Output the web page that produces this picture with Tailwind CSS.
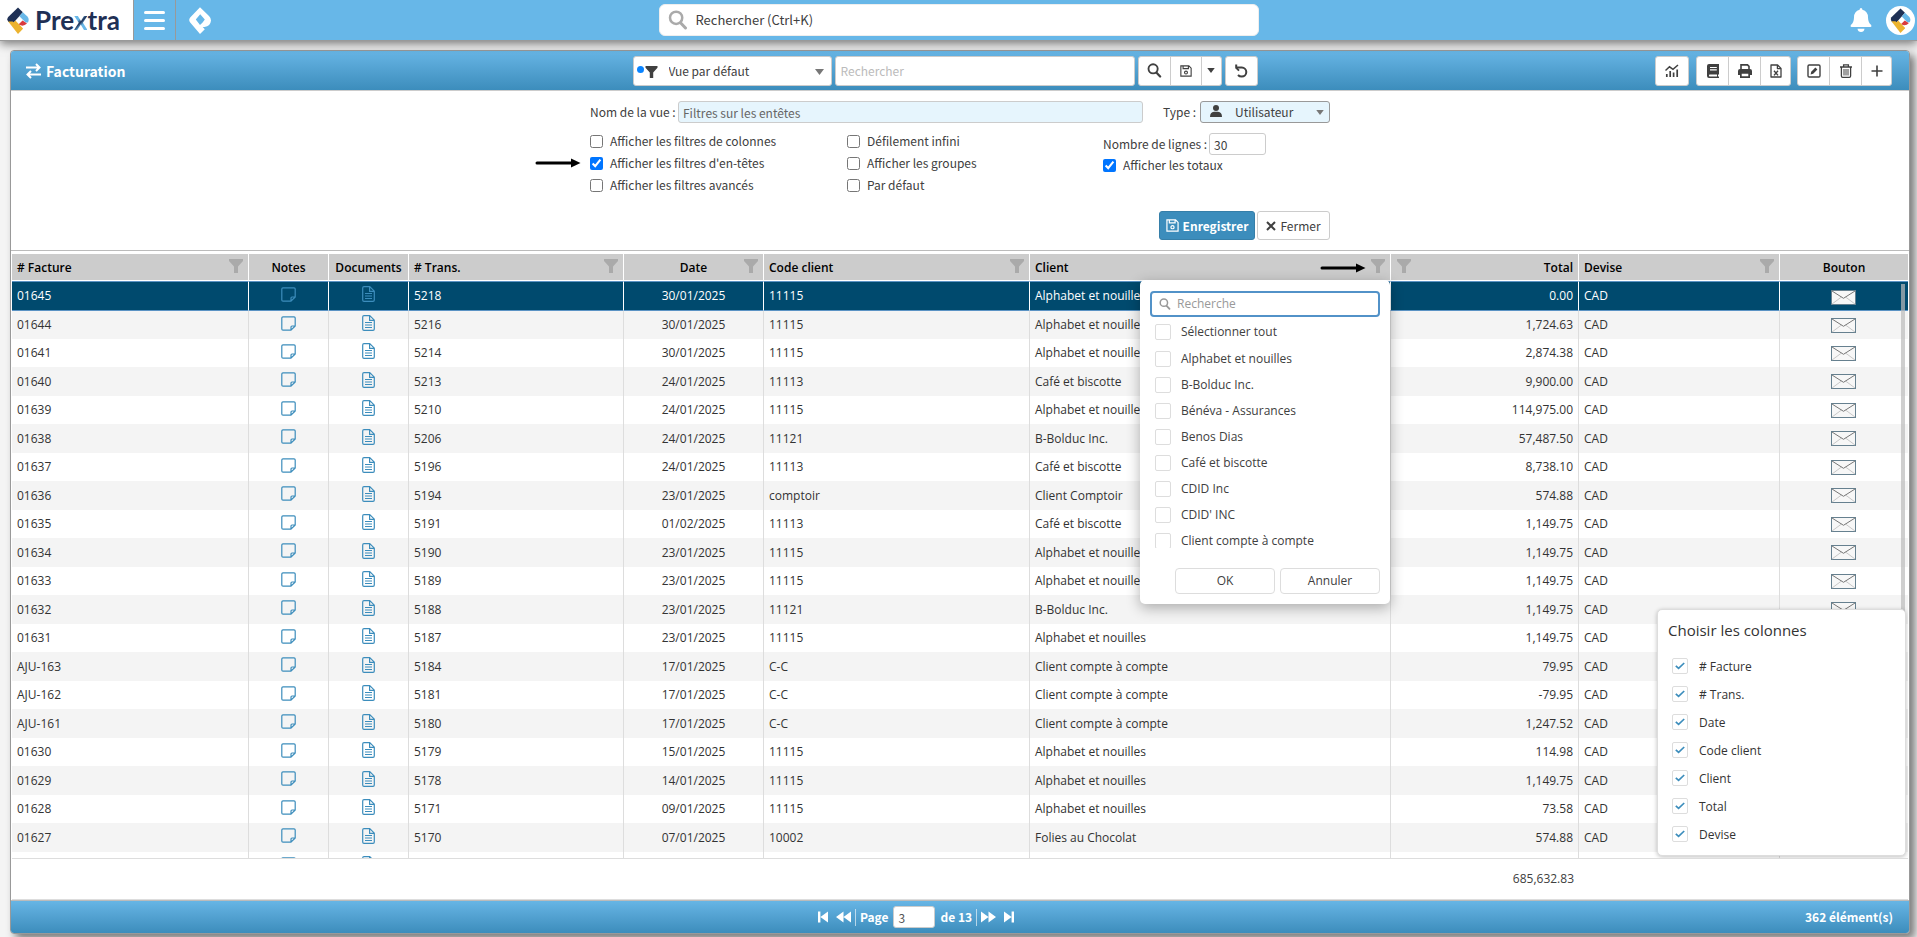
<!DOCTYPE html>
<html lang="fr">
<head>
    <meta charset="UTF-8">
    <meta name="viewport" content="width=device-width, initial-scale=1.0">
    <title>Prextra - Facturation</title>
    <script src="https://cdn.jsdelivr.net/npm/@tailwindcss/browser@4"></script>
</head>
<body class="h-screen flex flex-col overflow-hidden bg-[#f4f4f4] text-[#404040] text-[12px] leading-5 font-['Noto_Sans_CJK_SC',sans-serif]">

    <!-- Icons -->
    <svg class="hidden">
        <symbol id="logo" viewBox="0 0 22 27">
            <path fill="#1f3055" d="M11 0.5 L15.8 5.2 L5.2 17.2 L1.2 14.4 Q-0.6 12.4 1.2 10 Z"/>
            <path fill="#67b7e8" d="M15.8 5.2 L20.4 9.4 Q22.6 12 21 15.4 L18.6 15.6 L12.4 9.2 Z"/>
            <path fill="#d93a3e" d="M11.4 17.6 L15.6 13.6 L20 16.6 Q17.4 19 14.6 18.6 Z"/>
            <path fill="#ecb32f" d="M1.2 14.4 L5.6 14.4 L16 21.8 L11 27 Z"/>
            <path fill="#ecb32f" d="M5.2 17.2 L8.4 13.4 L16 21.6 L12 24 Z"/>
        </symbol>
        <symbol id="logo-plain" viewBox="0 0 22 27">
            <path fill="currentColor" fill-rule="evenodd" d="M11 0.3 L20 9 Q22 11 22 13.5 Q21.5 19 15.5 20 L13.7 20 L15.8 22.2 L11 27 L1.2 15.5 Q-0.8 13 1.2 10.5 Z M11.2 7.2 L6.8 12.6 L11 18 L13.6 15.4 L15.8 12.4 Z"/>
        </symbol>
        <symbol id="loupe" viewBox="0 0 16 16">
            <circle cx="6.5" cy="6.2" r="4.9" fill="none" stroke="currentColor" stroke-width="2"/>
            <path stroke="currentColor" stroke-width="2.4" stroke-linecap="round" d="M10.2 10.4 L14 14.4"/>
        </symbol>
        <symbol id="funnel" viewBox="0 0 14 14">
            <path fill="currentColor" d="M0 0 H14 V2 L9 7.5 V14 H5 V7.5 L0 2 Z"/>
        </symbol>
        <symbol id="save" viewBox="0 0 14 14">
            <path fill="none" stroke="currentColor" stroke-width="1.3" d="M1 1 H10.3 L13 3.7 V13 H1 Z M3.6 1 V4.2 H9.8 V1"/>
            <circle cx="7" cy="8.8" r="1.7" fill="none" stroke="currentColor" stroke-width="1.3"/>
        </symbol>
        <symbol id="undo" viewBox="0 0 14 14">
            <path fill="none" stroke="currentColor" stroke-width="2" d="M2 3.6 H7.8 A4.4 4.4 0 0 1 7.8 12.6 Q5.4 12.6 4 11"/>
            <path fill="none" stroke="currentColor" stroke-width="2" d="M2.2 0.4 V4.6 M2 3.6 L5 6.6"/>
        </symbol>
        <symbol id="chart" viewBox="0 0 14 14">
            <path fill="none" stroke="currentColor" stroke-width="1.5" d="M0.5 6.5 L4.5 2.8 L8 5.3 L13 1"/>
            <path stroke="currentColor" stroke-width="1.7" d="M1.8 10 V13 M5.2 7 V13 M8.6 8.5 V13 M12.2 5.5 V13"/>
        </symbol>
        <symbol id="book" viewBox="0 0 14 14">
            <path fill="currentColor" fill-rule="evenodd" d="M3 0 H13 V10.6 H12 V12.6 H13 V14 H3 Q1 14 1 12 V2 Q1 0 3 0 Z M4 3 V4.1 H10.8 V3 Z M4 5.3 V6.4 H10.8 V5.3 Z M3.4 10.6 Q2.4 11.6 3.4 12.6 H11 V10.6 Z"/>
        </symbol>
        <symbol id="print" viewBox="0 0 14 14">
            <path fill="none" stroke="currentColor" stroke-width="1.6" d="M3 5 V0.9 H9.5 L11 2.4 V5"/>
            <path fill="currentColor" fill-rule="evenodd" d="M2 5 H12 Q14 5 14 7 V11 H12 V14 H2 V11 H0 V7 Q0 5 2 5 Z M3.7 9.8 V12.3 H10.3 V9.8 Z"/>
        </symbol>
        <symbol id="excel" viewBox="0 0 12 14">
            <path fill="none" stroke="currentColor" stroke-width="1.3" stroke-linejoin="round" d="M1 1 H7.6 L11 4.4 V13 H1 Z M7.4 1 V4.6 H11"/>
            <path stroke="currentColor" stroke-width="1.4" d="M4 6.8 L8 11.4 M8 6.8 L4 11.4"/>
        </symbol>
        <symbol id="edit" viewBox="0 0 14 14">
            <rect x="1" y="1" width="12" height="12" rx="1.2" fill="none" stroke="currentColor" stroke-width="1.4"/>
            <path fill="currentColor" d="M3.6 10.4 L4.2 7.8 L8.4 3.6 L10.4 5.6 L6.2 9.8 Z"/>
        </symbol>
        <symbol id="trash" viewBox="0 0 14 14">
            <path fill="none" stroke="currentColor" stroke-width="1.3" d="M1 3 H13 M4.6 3 V0.8 H9.4 V3 M2.4 3 V12 Q2.4 13.3 3.7 13.3 H10.3 Q11.6 13.3 11.6 12 V3"/>
            <path stroke="currentColor" stroke-width="1" d="M5 5 V11.5 M7 5 V11.5 M9 5 V11.5"/>
        </symbol>
        <symbol id="plus" viewBox="0 0 14 14">
            <path stroke="currentColor" stroke-width="1.6" d="M7 1.5 V12.5 M1.5 7 H12.5"/>
        </symbol>
        <symbol id="note" viewBox="0 0 15 15">
            <path fill="none" stroke="currentColor" stroke-width="1.2" stroke-linejoin="round" d="M2 0.8 H13 Q14.2 0.8 14.2 2 V10 L10 14.2 H2 Q0.8 14.2 0.8 13 V2 Q0.8 0.8 2 0.8 Z M10 14 V11 Q10 10 11 10 H14"/>
        </symbol>
        <symbol id="doc" viewBox="0 0 13 16">
            <path fill="none" stroke="currentColor" stroke-width="1.2" stroke-linejoin="round" d="M2 0.7 H7.8 L12.3 5.2 V14 Q12.3 15.3 11 15.3 H2 Q0.7 15.3 0.7 14 V2 Q0.7 0.7 2 0.7 Z M7.6 0.8 V5.4 H12.2"/>
            <path stroke="currentColor" stroke-width="1" d="M3 7.5 H10 M3 10 H10 M3 12.5 H10"/>
        </symbol>
        <symbol id="mail" viewBox="0 0 25 15">
            <rect x="0.5" y="0.5" width="24" height="14" fill="#f7f7f7" stroke="#66808f"/>
            <path fill="none" stroke="#c8c8c8" d="M1 14 L10.5 7 M24 14 L14.5 7"/>
            <path fill="none" stroke="#777" d="M1 1 L12.5 8.3 L24 1"/>
        </symbol>
        <symbol id="check" viewBox="0 0 10 8">
            <path fill="none" stroke="currentColor" stroke-width="1.7" d="M0.8 3.8 L3.6 6.4 L9.2 1"/>
        </symbol>
        <symbol id="arrow" viewBox="0 0 46 10">
            <path stroke="#000" stroke-width="3" stroke-linecap="round" d="M2 5 H38"/>
            <path fill="#000" d="M36 0.5 L45.5 5 L36 9.5 Z"/>
        </symbol>
        <symbol id="first" viewBox="0 0 10 12">
            <path fill="currentColor" d="M0 0.5 H2.4 V11.5 H0 Z M10 0.5 V11.5 L2.4 6 Z"/>
        </symbol>
        <symbol id="rewind" viewBox="0 0 15 12">
            <path fill="currentColor" d="M7.5 0.5 V11.5 L0 6 Z M15 0.5 V11.5 L7.5 6 Z"/>
        </symbol>
    </svg>

    <!-- Top bar -->
    <header class="relative z-10 shrink-0 h-[41px] flex items-stretch bg-[#67b7e8] border-b border-[#999] shadow-[0_3px_9px_rgba(0,0,0,0.5)]">
        <a href="#" class="w-[134px] flex items-center gap-[6px] pl-[7px] bg-white border-r border-[#999]">
            <svg class="w-[22px] h-[27px] shrink-0"><use href="#logo"/></svg>
            <span class="text-[#1f3055] text-[26px] leading-[32px] font-bold font-['Lato',sans-serif]">Pre<span class="text-transparent bg-clip-text bg-linear-135 from-[#67b7e8] from-45% via-[#1f3055] via-55% to-[#67b7e8] to-65%">x</span>tra</span>
        </a>
        <button class="w-[42px] flex flex-col items-center justify-center gap-[5px] border-r border-[#999]" aria-label="Menu">
            <span class="w-[21px] h-[3px] rounded-sm bg-white"></span>
            <span class="w-[21px] h-[3px] rounded-sm bg-white"></span>
            <span class="w-[21px] h-[3px] rounded-sm bg-white"></span>
        </button>
        <button class="w-[48px] flex items-center justify-center text-white" aria-label="Accueil">
            <svg class="w-[22px] h-[27px]"><use href="#logo-plain"/></svg>
        </button>
        <div class="absolute left-1/2 -translate-x-1/2 top-1 w-[600px] h-8 flex items-center gap-2 pl-2 bg-white border border-[#eee] rounded-md">
            <svg class="w-5 h-5 text-[#aaa]"><use href="#loupe"/></svg>
            <input class="flex-1 outline-none text-[13px] placeholder:text-[#404040]" placeholder="Rechercher (Ctrl+K)" aria-label="Rechercher">
        </div>
        <div class="ml-auto flex items-center gap-[14px] pr-[2px]">
            <button aria-label="Notifications">
                <svg class="w-[22px] h-[24px] text-white" viewBox="0 0 22 24" fill="currentColor">
                    <path d="M11 0 Q12.4 0 12.4 1.8 Q18 3.2 18 9.5 Q18.2 15 21.2 17 Q22 19 20.5 19 H1.5 Q0 19 0.8 17 Q3.8 15 4 9.5 Q4 3.2 9.6 1.8 Q9.6 0 11 0 Z"/>
                    <path d="M7.5 20.8 H14.5 Q14 24 11 24 Q8 24 7.5 20.8 Z"/>
                </svg>
            </button>
            <button class="w-[29px] h-[29px] rounded-full bg-white flex items-center justify-center" aria-label="Compte">
                <svg class="w-[25px] h-[25px]"><use href="#logo"/></svg>
            </button>
        </div>
    </header>

    <!-- Panel -->
    <main class="flex-1 min-h-0 flex flex-col mt-[9px] ml-[10px] mr-[7px] mb-[3px] bg-white border border-[#999] rounded-[4px] shadow-[5px_5px_8px_rgba(0,0,0,0.5)]">
        <div class="shrink-0 h-10 grid grid-cols-[1fr_auto_1fr] items-center rounded-t-[3px] bg-linear-to-b from-[#67b5e5] to-[#3c8dbc] border-b border-[#ccc]">
            <h1 class="flex items-center gap-[5px] pl-[15px] text-white text-[14px] font-bold">
                <svg class="w-[15px] h-4" viewBox="0 0 15 16" fill="none" stroke="currentColor" stroke-width="2"><path d="M0 4.5 H13 M10 1 L13.5 4.5 L10 8 M15 11.5 H2 M5 8 L1.5 11.5 L5 15"/></svg>
                Facturation
            </h1>
            <div class="flex gap-[3px] mr-[30px] h-[30px]">
                <div class="relative w-[199px]">
                    <select class="w-full h-full appearance-none pl-[35px] bg-white border border-[#ccc] rounded-[3px]" aria-label="Vue">
                        <option>Vue par défaut</option>
                    </select>
                    <span class="absolute left-1 top-[10px] w-[7px] h-[7px] rounded-full bg-[#0a84ff]"></span>
                    <svg class="absolute left-3 top-[10px] w-[13px] h-[12px]"><use href="#funnel"/></svg>
                    <svg class="absolute right-2 top-[13px] w-[9px] h-[6px] text-[#777]" viewBox="0 0 9 6"><path fill="currentColor" d="M0 0 H9 L4.5 6 Z"/></svg>
                </div>
                <input class="w-[300px] px-[5px] bg-white border border-[#ccc] rounded-[3px] placeholder:text-[#bbb]" placeholder="Rechercher" aria-label="Rechercher dans la liste">
                <div class="flex bg-white border border-[#ccc] rounded-[3px] divide-x divide-[#ccc]">
                    <button class="w-8 flex items-center justify-center" aria-label="Chercher"><svg class="w-[15px] h-[15px]"><use href="#loupe"/></svg></button>
                    <button class="w-[31px] flex items-center justify-center" aria-label="Sauvegarder"><svg class="w-3 h-3"><use href="#save"/></svg></button>
                    <button class="w-[19px] flex items-center justify-center" aria-label="Options"><svg class="w-2 h-[5px]" viewBox="0 0 9 6"><path fill="currentColor" d="M0 0 H9 L4.5 6 Z"/></svg></button>
                </div>
                <button class="w-[33px] flex items-center justify-center bg-white border border-[#ccc] rounded-[3px]" aria-label="Annuler"><svg class="w-[14px] h-[14px]"><use href="#undo"/></svg></button>
            </div>
            <div class="flex justify-end pr-[17px] h-[30px]">
                <button class="w-[34px] mr-[7px] flex items-center justify-center bg-white border border-[#ccc] rounded-[3px]" aria-label="Graphique"><svg class="w-[14px] h-[14px]"><use href="#chart"/></svg></button>
                <div class="flex mr-[6px] bg-white border border-[#ccc] rounded-[3px] divide-x divide-[#ccc]">
                    <button class="w-8 flex items-center justify-center" aria-label="Journal"><svg class="w-[14px] h-[14px]"><use href="#book"/></svg></button>
                    <button class="w-8 flex items-center justify-center" aria-label="Imprimer"><svg class="w-[14px] h-[14px]"><use href="#print"/></svg></button>
                    <button class="w-[29px] flex items-center justify-center" aria-label="Excel"><svg class="w-3 h-[14px]"><use href="#excel"/></svg></button>
                </div>
                <div class="flex bg-white border border-[#ccc] rounded-[3px] divide-x divide-[#ccc]">
                    <button class="w-8 flex items-center justify-center" aria-label="Modifier"><svg class="w-[14px] h-[14px]"><use href="#edit"/></svg></button>
                    <button class="w-8 flex items-center justify-center" aria-label="Supprimer"><svg class="w-[14px] h-[14px]"><use href="#trash"/></svg></button>
                    <button class="w-[29px] flex items-center justify-center" aria-label="Ajouter"><svg class="w-[14px] h-[14px]"><use href="#plus"/></svg></button>
                </div>
            </div>
        </div>

        <!-- View settings -->
        <form class="shrink-0 border-b border-[#bbb] pt-[10px] pb-[10px]">
            <div class="w-[740px] mx-auto">
                <div class="flex items-center h-[22px]">
                    <label for="viewName" class="w-[88px] whitespace-nowrap">Nom de la vue :</label>
                    <input id="viewName" value="Filtres sur les entêtes" class="flex-1 h-[22px] px-1 bg-[#e6f5fd] border border-[#ccc] rounded-[3px] text-[#666]">
                    <label for="viewType" class="ml-5 w-[37px] whitespace-nowrap">Type :</label>
                    <div class="relative w-[130px] h-[22px]">
                        <select id="viewType" class="w-full h-full appearance-none pl-[34px] bg-[#e6f5fd] border border-[#999] rounded-[3px] leading-4">
                            <option>Utilisateur</option>
                        </select>
                        <svg class="absolute left-[10px] top-[4px] w-3 h-3" viewBox="0 0 12 12" fill="currentColor"><circle cx="6" cy="3" r="3"/><path d="M0 12 Q0 7 4 6.8 H8 Q12 7 12 12 Z"/></svg>
                        <svg class="absolute right-[6px] top-[9px] w-2 h-[5px] text-[#777]" viewBox="0 0 9 6"><path fill="currentColor" d="M0 0 H9 L4.5 6 Z"/></svg>
                    </div>
                </div>
                <div class="grid grid-cols-[257px_256px_1fr] mt-[8px]">
                    <div class="flex flex-col gap-[2px]">
                        <label class="flex items-center gap-[7px]"><input type="checkbox" class="w-[13px] h-[13px]">Afficher les filtres de colonnes</label>
                        <label class="relative flex items-center gap-[7px]">
                            <svg class="absolute right-full mr-[9px] w-[46px] h-[10px]"><use href="#arrow"/></svg>
                            <input type="checkbox" class="w-[13px] h-[13px]" checked>Afficher les filtres d'en-têtes
                        </label>
                        <label class="flex items-center gap-[7px]"><input type="checkbox" class="w-[13px] h-[13px]">Afficher les filtres avancés</label>
                    </div>
                    <div class="flex flex-col gap-[2px]">
                        <label class="flex items-center gap-[7px]"><input type="checkbox" class="w-[13px] h-[13px]">Défilement infini</label>
                        <label class="flex items-center gap-[7px]"><input type="checkbox" class="w-[13px] h-[13px]">Afficher les groupes</label>
                        <label class="flex items-center gap-[7px]"><input type="checkbox" class="w-[13px] h-[13px]">Par défaut</label>
                    </div>
                    <div>
                        <div class="flex items-center pt-[2px]">
                            <label for="lineCount" class="w-[106px] whitespace-nowrap">Nombre de lignes :</label>
                            <input id="lineCount" value="30" class="w-[57px] h-[22px] px-1 border border-[#ccc] rounded-[3px]">
                        </div>
                        <label class="flex items-center gap-[7px]"><input type="checkbox" class="w-[13px] h-[13px]" checked>Afficher les totaux</label>
                    </div>
                </div>
                <div class="flex justify-end gap-[2px] mt-4">
                    <button type="button" class="h-[29px] w-24 flex items-center justify-center gap-1 bg-[#3c8dbc] border border-[#367fa9] rounded-[3px] text-white font-bold"><svg class="w-[13px] h-[13px]"><use href="#save"/></svg>Enregistrer</button>
                    <button type="button" class="h-[29px] w-[73px] flex items-center justify-center gap-1 bg-white border border-[#ccc] rounded-[3px]"><svg class="w-[10px] h-[10px]" viewBox="0 0 10 10"><path stroke="currentColor" stroke-width="2" d="M1 1 L9 9 M9 1 L1 9"/></svg>Fermer</button>
                </div>
            </div>
        </form>

        <!-- Grid -->
        <div class="relative flex-1 min-h-0 overflow-hidden mx-px pt-[3px] border-b border-[#ddd] leading-4 text-[#333] font-['Open_Sans',sans-serif]">
            <table class="w-full table-fixed border-separate border-spacing-0">
                <colgroup>
                    <col class="w-[237px]"><col class="w-[80px]"><col class="w-[80px]"><col class="w-[215px]"><col class="w-[140px]"><col class="w-[266px]"><col><col class="w-[188px]"><col class="w-[201px]"><col class="w-[128px]">
                </colgroup>
                <thead class="bg-[#ccc] text-black">
                    <tr id="head" class="h-[27px]"></tr>
                </thead>
                <tbody id="rows"></tbody>
            </table>
            <div class="absolute right-[3px] top-[33px] w-1 h-[500px] bg-[#bbb]/70"></div>

            <!-- Column chooser -->
            <section class="absolute right-[2px] bottom-[2px] w-[249px] h-[247px] px-[10px] pt-[9px] bg-white border border-[#ddd] rounded-[5px] shadow-[0_1px_4px_rgba(0,0,0,0.25)]">
                <h2 class="text-[15px] leading-[22px]">Choisir les colonnes</h2>
                <div id="columns" class="pl-1 pt-3"></div>
            </section>
        </div>

        <div class="shrink-0 mx-px h-[41px] flex items-center border-b border-[#ddd] font-['Open_Sans',sans-serif]">
            <table class="w-full table-fixed">
                <colgroup>
                    <col><col class="w-[188px]"><col class="w-[329px]">
                </colgroup>
                <tbody>
                    <tr><td></td><td class="text-right pr-[5px]">685,632.83</td><td></td></tr>
                </tbody>
            </table>
        </div>

        <!-- Pager -->
        <footer class="shrink-0 h-[33px] flex items-center border-t border-[#bbb] rounded-b-[3px] bg-linear-to-b from-[#67b5e5] to-[#3c8dbc] pr-4 text-white font-bold">
            <div class="flex-1 flex items-center justify-center pl-4">
                <button aria-label="Première page"><svg class="w-[10px] h-3"><use href="#first"/></svg></button>
                <button class="ml-2" aria-label="Page précédente"><svg class="w-[15px] h-3"><use href="#rewind"/></svg></button>
                <span class="w-px h-[17px] mx-[4px] bg-white/60"></span>
                <label for="page">Page</label>
                <input id="page" value="3" class="w-[42px] h-[22px] mx-[5px] px-1 bg-white border border-[#ccc] rounded-[3px] text-[#555] font-normal">
                <span>de 13</span>
                <span class="w-px h-[17px] mx-[4px] bg-white/60"></span>
                <button aria-label="Page suivante"><svg class="w-[15px] h-3 rotate-180"><use href="#rewind"/></svg></button>
                <button class="ml-2" aria-label="Dernière page"><svg class="w-[10px] h-3 rotate-180"><use href="#first"/></svg></button>
            </div>
            <span>362 élément(s)</span>
        </footer>
    </main>

    <!-- Client header filter -->
    <template id="clientFilter">
        <div class="absolute z-10 right-0 top-full w-[250px] h-[324px] px-[10px] pt-[11px] bg-white rounded-[5px] shadow-[0_4px_14px_rgba(0,0,0,0.3)] text-left font-normal text-[#404040]">
            <div class="flex items-center gap-[6px] h-[26px] pl-[7px] bg-white border-2 border-[#5292c8] rounded-[4px]">
                <svg class="w-3 h-3 text-[#999]"><use href="#loupe"/></svg>
                <input class="flex-1 min-w-0 outline-none placeholder:text-[#999]" placeholder="Recherche" aria-label="Recherche" id="filterSearch">
            </div>
            <div id="clients" class="h-[231px] overflow-hidden pl-[5px] pt-px"></div>
            <div class="flex justify-end gap-[5px] mt-5">
                <button class="w-[100px] h-[26px] border border-[#ddd] rounded-[4px]">OK</button>
                <button class="w-[100px] h-[26px] border border-[#ddd] rounded-[4px]">Annuler</button>
            </div>
        </div>
    </template>

    <script>
        const heads = [
            ['# Facture', 'left', 'right'],
            ['Notes', 'center', ''],
            ['Documents', 'center', ''],
            ['# Trans.', 'left', 'right'],
            ['Date', 'center', 'right'],
            ['Code client', 'left', 'right'],
            ['Client', 'left', 'right'],
            ['Total', 'right', 'left'],
            ['Devise', 'left', 'right'],
            ['Bouton', 'center', '']
        ];

        const invoices = [
            ['01645', '5218', '30/01/2025', '11115', 'Alphabet et nouilles', '0.00'],
            ['01644', '5216', '30/01/2025', '11115', 'Alphabet et nouilles', '1,724.63'],
            ['01641', '5214', '30/01/2025', '11115', 'Alphabet et nouilles', '2,874.38'],
            ['01640', '5213', '24/01/2025', '11113', 'Café et biscotte', '9,900.00'],
            ['01639', '5210', '24/01/2025', '11115', 'Alphabet et nouilles', '114,975.00'],
            ['01638', '5206', '24/01/2025', '11121', 'B-Bolduc Inc.', '57,487.50'],
            ['01637', '5196', '24/01/2025', '11113', 'Café et biscotte', '8,738.10'],
            ['01636', '5194', '23/01/2025', 'comptoir', 'Client Comptoir', '574.88'],
            ['01635', '5191', '01/02/2025', '11113', 'Café et biscotte', '1,149.75'],
            ['01634', '5190', '23/01/2025', '11115', 'Alphabet et nouilles', '1,149.75'],
            ['01633', '5189', '23/01/2025', '11115', 'Alphabet et nouilles', '1,149.75'],
            ['01632', '5188', '23/01/2025', '11121', 'B-Bolduc Inc.', '1,149.75'],
            ['01631', '5187', '23/01/2025', '11115', 'Alphabet et nouilles', '1,149.75'],
            ['AJU-163', '5184', '17/01/2025', 'C-C', 'Client compte à compte', '79.95'],
            ['AJU-162', '5181', '17/01/2025', 'C-C', 'Client compte à compte', '-79.95'],
            ['AJU-161', '5180', '17/01/2025', 'C-C', 'Client compte à compte', '1,247.52'],
            ['01630', '5179', '15/01/2025', '11115', 'Alphabet et nouilles', '114.98'],
            ['01629', '5178', '14/01/2025', '11115', 'Alphabet et nouilles', '1,149.75'],
            ['01628', '5171', '09/01/2025', '11115', 'Alphabet et nouilles', '73.58'],
            ['01627', '5170', '07/01/2025', '10002', 'Folies au Chocolat', '574.88'],
            ['', '', '', '', '', '']
        ];

        const clients = ['Alphabet et nouilles', 'B-Bolduc Inc.', 'Bénéva - Assurances', 'Benos Dias', 'Café et biscotte', 'CDID Inc', "CDID' INC", 'Client compte à compte'];
        const columns = ['# Facture', '# Trans.', 'Date', 'Code client', 'Client', 'Total', 'Devise'];

        const alignClass = { left: 'text-left', center: 'text-center', right: 'text-right' };
        const funnelClass = {
            left: 'absolute left-[6px] top-[5px] w-[14px] h-[14px] text-[#aaa]',
            right: 'absolute right-[5px] top-[5px] w-[14px] h-[14px] text-[#aaa]'
        };

        document.getElementById('head').innerHTML = heads.map(([name, align, funnel]) => `
            <th class="relative px-[5px] pt-[2px] font-semibold border-r border-b border-white last:border-r-0 ${alignClass[align]}">
                ${name}
                ${funnel ? `<svg class="${funnelClass[funnel]}"><use href="#funnel"/></svg>` : ''}
                ${name === 'Client' ? '<svg class="absolute right-[24px] top-[9px] w-[46px] h-[10px]"><use href="#arrow"/></svg>' + document.getElementById('clientFilter').innerHTML : ''}
            </th>`).join('');

        document.getElementById('rows').innerHTML = invoices.map((r, i) => {
            const selected = i === 0;
            let rowClass = i % 2 ? 'h-[29px] bg-[#f4f4f4]' : 'h-[28px]';
            if (i === 1) rowClass = 'h-[28px] bg-[#f4f4f4]';
            if (selected) rowClass = 'h-[30px] bg-[#004a6e] text-white font-medium';
            const cell = selected ? 'px-[5px] border-y border-y-[#5b93c4] border-r border-r-white' : 'px-[5px] border-r border-r-[#ddd]';
            const last = selected ? 'border-y border-y-[#5b93c4] pr-[2px] pt-[2px]' : 'pr-[2px]';
            return `
            <tr class="${rowClass}">
                <td class="${cell}">${r[0]}</td>
                <td class="${cell} pb-[4px]"><svg class="mx-auto w-[15px] h-[15px] text-[#3c8dbc]"><use href="#note"/></svg></td>
                <td class="${cell} pb-[4px]"><svg class="mx-auto w-[13px] h-4 text-[#3c8dbc]"><use href="#doc"/></svg></td>
                <td class="${cell}">${r[1]}</td>
                <td class="${cell} text-center">${r[2]}</td>
                <td class="${cell}">${r[3]}</td>
                <td class="${cell}">${r[4]}</td>
                <td class="${cell} text-right">${r[5]}</td>
                <td class="${cell}">${r[0] ? 'CAD' : ''}</td>
                <td class="${last}"><svg class="mx-auto w-[25px] h-[15px]"><use href="#mail"/></svg></td>
            </tr>`;
        }).join('');

        const box = 'appearance-none w-4 h-4 bg-white border border-[#ddd] rounded-[2px] col-start-1 row-start-1';

        document.getElementById('clients').innerHTML = `
            <label class="flex items-center gap-[10px] h-[28px]"><input type="checkbox" class="${box}">Sélectionner tout</label>` +
            clients.map(c => `<label class="flex items-center gap-[10px] h-[26px]"><input type="checkbox" class="${box}">${c}</label>`).join('');

        document.getElementById('columns').innerHTML = columns.map(c => `
            <label class="flex items-center gap-[11px] h-7">
                <span class="grid place-items-center mb-[3px]">
                    <input type="checkbox" checked class="${box}">
                    <svg class="relative w-[10px] h-2 text-[#3c8dbc] col-start-1 row-start-1"><use href="#check"/></svg>
                </span>
                ${c}
            </label>`).join('');

        document.getElementById('filterSearch').focus();
    </script>
</body>
</html>
